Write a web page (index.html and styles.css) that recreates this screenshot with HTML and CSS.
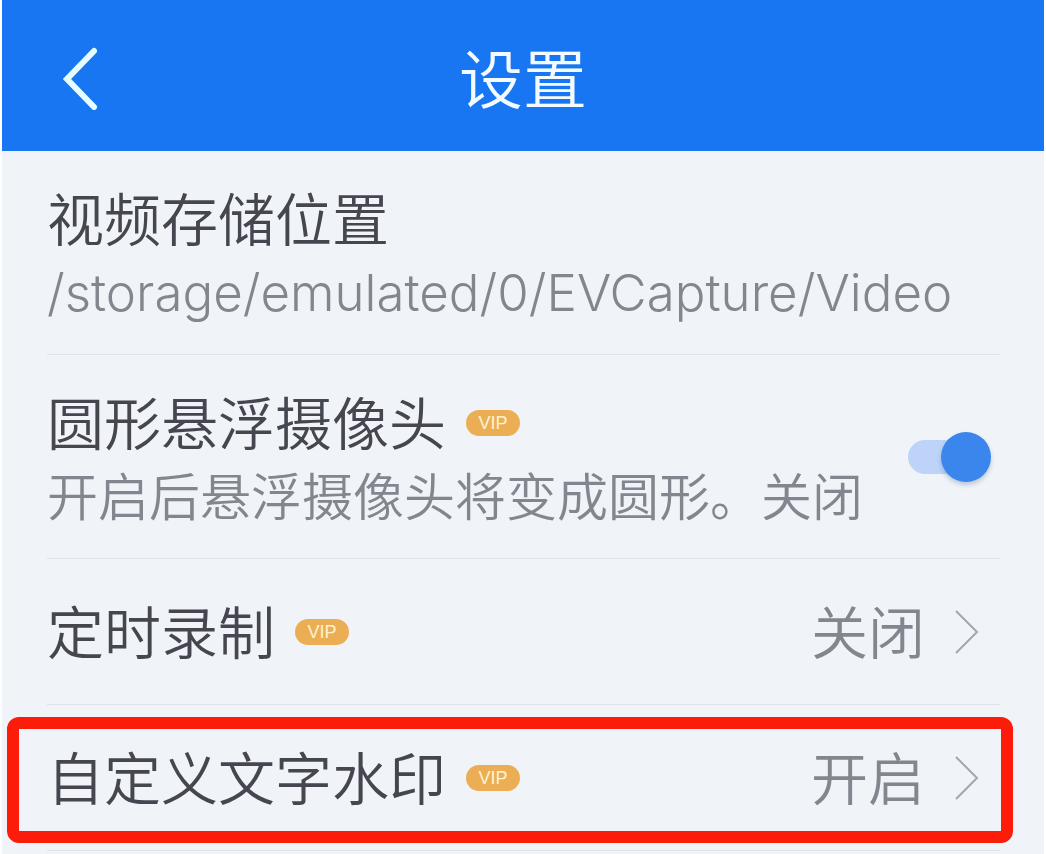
FILE: index.html
```html
<!DOCTYPE html>
<html lang="zh-CN">
<head>
    <meta charset="UTF-8">
    <meta name="viewport" content="width=device-width, initial-scale=1.0">
    <title>设置</title>
    <link rel="stylesheet" href="styles.css">
</head>
<body>

    <header class="topbar">
        <button class="back" type="button" aria-label="返回">
            <svg width="38" height="64" viewBox="0 0 38 64">
                <path d="M34 5 L7 33 L34 61" />
            </svg>
        </button>
        <h1>设置</h1>
    </header>

    <main class="settings">
        <section class="row">
            <div class="row-text">
                <h2><span class="name">视频存储位置</span></h2>
                <p class="path">/storage/emulated/0/EVCapture/Video</p>
            </div>
        </section>

        <section class="row">
            <div class="row-text">
                <h2><label class="name" for="roundCamera">圆形悬浮摄像头</label><span class="vip">VIP</span></h2>
                <p>开启后悬浮摄像头将变成圆形。关闭</p>
            </div>
            <input class="switch" id="roundCamera" type="checkbox" checked>
        </section>

        <button class="row row-link" type="button">
            <span class="name">定时录制</span>
            <span class="vip">VIP</span>
            <span class="value">关闭</span>
            <svg class="arrow" width="24" height="44" viewBox="0 0 24 44">
                <path d="M1 1 L22 22 L1 43" />
            </svg>
        </button>

        <button class="row row-link marked" type="button">
            <span class="name">自定义文字水印</span>
            <span class="vip">VIP</span>
            <span class="value">开启</span>
            <svg class="arrow" width="24" height="44" viewBox="0 0 24 44">
                <path d="M1 1 L22 22 L1 43" />
            </svg>
        </button>
    </main>

</body>
</html>
```
FILE: styles.css
```css
:root {
    --blue: #1876f2;
    --bg: #f0f3f8;
    --text: #45464f;
    --text-light: #84868f;
    --line: #dfe2e8;
    --vip: #ecae54;
    --mark: #fc1c0a;
}

* {
    box-sizing: border-box;
}

body {
    margin: 0;
    padding: 0 2px;
    background: #fff;
    color: var(--text);
    font-family: "Noto Sans CJK SC", sans-serif;
    font-weight: 350;
}

button {
    padding: 0;
    border: 0;
    background: none;
    color: inherit;
    font: inherit;
    cursor: pointer;
}

/* Top bar */
.topbar {
    display: grid;
    grid-template-columns: 1fr auto 1fr;
    align-items: center;
    height: 151px;
    padding: 4px 58px 0;
    background: var(--blue);
    color: #f4fbff;
}

.topbar h1 {
    margin: 0;
    padding-bottom: 6px;
    font-size: 64px;
    font-weight: inherit;
    line-height: 70px;
}

.back {
    display: flex;
    justify-self: start;
}

.back path {
    fill: none;
    stroke: #e6fcff;
    stroke-width: 6;
    stroke-linecap: round;
}

/* Settings list */
.settings {
    min-height: calc(100vh - 151px);
    padding: 0 44px 0 45px;
    background: var(--bg);
}

.row {
    display: flex;
    align-items: center;
    width: 100%;
    padding: 30px 0 25px;
    border-bottom: 1px solid var(--line);
}

.row-text {
    flex: 1;
}

.row h2 {
    display: flex;
    align-items: center;
    margin: 0;
    font-weight: inherit;
}

.row p {
    margin: 0;
    padding-bottom: 6px;
    color: var(--text-light);
    font-size: 51px;
    line-height: 66px;
    white-space: nowrap;
}

.row .path {
    padding: 3px 0;
    font-family: Inter, sans-serif;
    font-weight: 300;
}

/* CJK glyphs sit low in the line, the padding lifts them to the middle */
.name,
.value {
    padding-bottom: 6px;
    font-size: 57px;
    line-height: 70px;
}

.row-link {
    padding: 35px 0 34px;
    text-align: left;
}

.value {
    margin-left: auto;
    color: var(--text-light);
}

.arrow {
    margin: 0 21px 0 30px;
}

.arrow path {
    fill: none;
    stroke: #a3a6ab;
    stroke-width: 2;
}

.vip {
    width: 54px;
    height: 26px;
    margin-left: 20px;
    border-radius: 13px;
    background: var(--vip);
    color: #fff3cf;
    font-family: "Liberation Sans", sans-serif;
    font-size: 18px;
    font-weight: 400;
    line-height: 27px;
    text-align: center;
}

/* Toggle */
.switch {
    position: relative;
    width: 83px;
    height: 50px;
    margin: 0 9px 4px 0;
    appearance: none;
    cursor: pointer;
}

.switch::before {
    content: "";
    position: absolute;
    inset: 8px 8px 8px 0;
    border-radius: 17px;
    background: #bdd4f8;
}

.switch::after {
    content: "";
    position: absolute;
    top: 0;
    left: 0;
    width: 50px;
    height: 50px;
    border-radius: 50%;
    background: #a9b4c4;
    box-shadow: 0 3px 4px rgba(40, 70, 120, 0.25);
}

.switch:checked::after {
    left: 33px;
    background: #3b86ec;
}

/* Red frame around the highlighted row */
.marked {
    position: relative;
}

.marked::after {
    content: "";
    position: absolute;
    inset: 12px -13px 7px -40px;
    border: 12px solid var(--mark);
    border-radius: 12px;
}
```
